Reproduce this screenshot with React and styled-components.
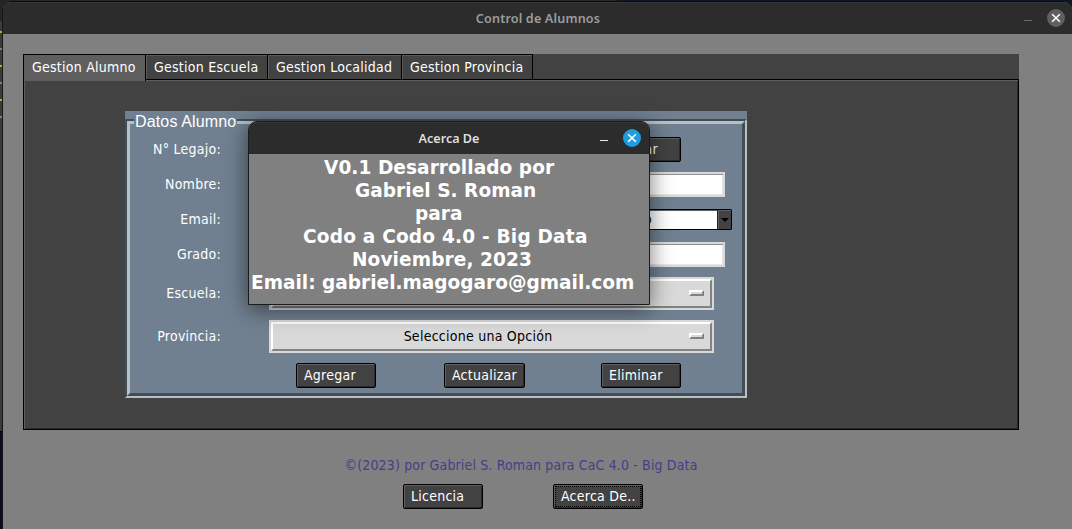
import React from "react";
import styled, { createGlobalStyle, css } from "styled-components";

const Global = createGlobalStyle`
  *, *::before, *::after { box-sizing: border-box; }
  html, body { margin: 0; padding: 0; background: #0b111b; overflow: hidden; }
  body {
    font-family: "DejaVu Sans Condensed", "DejaVu Sans", sans-serif;
    font-stretch: condensed;
    font-size: 14px;
    line-height: 16px;
    letter-spacing: 0.25px;
    color: #fff;
  }
`;

const Desktop = styled.div`
  width: 1072px;
  height: 529px;
  display: flex;
  padding-top: 1px;
  background: linear-gradient(90deg, #262626 617px, #0e1622 617px);
  overflow: hidden;
`;

const EditorEdge = styled.div`
  width: 2px;
  height: 528px;
  display: flex;
  flex-direction: column;
  gap: 15px;
  padding-top: 30px;
  background: linear-gradient(180deg, #262626 20px, #3b3b3b 20px, #3b3b3b 430px, #000 430px, #000 431px, #0a101b 431px);
`;

const CodeMark = styled.i`
  height: 2px;
  background: ${(p) => (p.$green ? "#86c232" : "#6088b0")};
`;

const Window = styled.main`
  width: 1070px;
  height: 528px;
  border-left: 1px solid #161616;
  border-top: 1px solid #0c0c0c;
  border-radius: 9px 9px 0 0;
  background: #808080;
  overflow: hidden;
`;

const TitleBar = styled.header`
  height: 32px;
  display: grid;
  grid-template-columns: 1fr auto 1fr;
  align-items: center;
  background: #2c2c2c;
  box-shadow: inset 0 1px #373737;
  font-family: "Noto Sans", sans-serif;
  font-stretch: normal;
  font-weight: 600;
  font-size: 12.6px;
  color: ${(p) => (p.$active ? "#dedede" : "#9d9d9d")};
  padding-right: ${(p) => (p.$active ? "8px" : "7px")};
  padding-left: 8px;
`;

const WindowTitle = styled.span`
  grid-column: 2;
  padding-top: 2px;
  letter-spacing: ${(p) => p.$spacing || "0"};
`;

const Controls = styled.div`
  display: flex;
  justify-content: flex-end;
  align-items: center;
  gap: 15px;
`;

const Minimize = styled.i`
  width: 8px;
  height: 1px;
  margin-top: 4px;
  background: ${(p) => (p.$active ? "#e8e8e8" : "#6c6c6c")};
`;

const CloseButton = styled.svg`
  width: 18px;
  height: 18px;
  display: block;
`;

function WindowControls({ active }) {
  return (
    <Controls>
      <Minimize $active={active} />
      <CloseButton viewBox="0 0 18 18">
        <circle cx="9" cy="9" r="9" fill={active ? "#1f9ede" : "#5f5f5f"} />
        <path d="M5.2 5.2 12.8 12.8M12.8 5.2 5.2 12.8" stroke="#fff" strokeWidth="1.6" />
      </CloseButton>
    </Controls>
  );
}

const Content = styled.div`
  padding: 20px 53px 0 20px;
`;

const TabStrip = styled.nav`
  display: flex;
  height: 25px;
  background: #424242;
`;

const Tab = styled.div`
  width: ${(p) => p.$width}px;
  height: ${(p) => (p.$selected ? 27 : 25)}px;
  padding: 4px 0 0 8px;
  border: solid #000;
  border-width: 1px 1px 0 ${(p) => (p.$selected ? 1 : 0)}px;
  background: ${(p) => (p.$selected ? "#5f5f5f" : "#424242")};
  box-shadow: ${(p) => (p.$selected ? "none" : "inset 1px 1px #5c5c5c")};
  position: relative;
  white-space: nowrap;
`;

const Pane = styled.section`
  height: 351px;
  padding: 31px 0 0 100px;
  border: 1px solid #000;
  background: #424242;
  box-shadow: inset 1px 1px #5f5f5f, inset -1px -1px #2a2a2a;
`;

const LabelFrame = styled.section`
  width: 622px;
  height: 287px;
  margin-left: 1px;
  padding-top: 8px;
  background: #708090;
`;

const Groove = styled.div`
  height: 279px;
  border: 2px solid;
  border-color: #434d56 #b7bfc7 #b7bfc7 #434d56;
`;

const GrooveInner = styled.div`
  height: 275px;
  border: 3px solid;
  border-color: #b7bfc7 #434d56 #434d56 #b7bfc7;
`;

const Legend = styled.h2`
  width: 103px;
  height: 18px;
  margin: -11px 0 1px 4px;
  padding-left: 1px;
  background: #708090;
  font: 400 16px/18px "Liberation Sans", sans-serif;
  letter-spacing: 0.15px;
  position: relative;
  white-space: nowrap;
`;

const Row = styled.div`
  height: ${(p) => (p.$tall ? 43 : 35)}px;
  display: grid;
  grid-template-columns: 91px 1fr;
  column-gap: 48px;
  align-items: center;
`;

const Label = styled.label`
  padding-bottom: 2px;
  text-align: right;
  white-space: nowrap;
`;

const Field = styled.div`
  display: flex;
  padding-left: ${(p) => p.$indent || 0}px;
`;

const Button = styled.button`
  width: ${(p) => p.$width || 80}px;
  height: 25px;
  padding: 0 0 1px 7px;
  border: 1px solid #000;
  border-radius: 2px;
  background: #424242;
  box-shadow: inset 1px 1px #606060, inset -1px -1px #2b2b2b;
  color: #fff;
  font: inherit;
  letter-spacing: inherit;
  text-align: left;
  white-space: nowrap;
  ${(p) =>
    p.$focused &&
    css`
      outline: 1px dotted #000;
      outline-offset: -3px;
    `}
`;

const Entry = styled.div`
  width: 170px;
  height: 25px;
  border: 2px solid #d9d9d9;
  background: #fff;
  box-shadow: inset 1px 1px #8f8f8f, inset -1px -1px #e8e8e8;
`;

const Combo = styled.div`
  width: 170px;
  height: 21px;
  display: flex;
  border: 1px solid #000;
  border-radius: 1px;
  background: #fff;
  box-shadow: inset 0 1px #606060;
  color: #111;
`;

const ComboValue = styled.span`
  flex: 1;
  padding: 1px 0 0 81px;
`;

const ComboArrow = styled.span`
  width: 14px;
  display: grid;
  place-items: center;
  border-left: 1px solid #222;
  background: #424242;
  box-shadow: inset 1px 1px #606060;
`;

const OptionMenu = styled.div`
  width: 445px;
  height: 33px;
  padding: 2px;
  background: #d9d9d9;
  color: #000;
`;

const OptionFace = styled.div`
  height: 29px;
  display: grid;
  grid-template-columns: 1fr 15px;
  align-items: center;
  padding: 0 6px 1px 4px;
  border: 2px solid;
  border-color: #fff #828282 #828282 #fff;
  text-align: center;
`;

const OptionText = styled.span`
  padding: 0 10px 1px 0;
`;

const Indicator = styled.i`
  height: 6px;
  border: 2px solid;
  border-color: #fff #828282 #828282 #fff;
`;

const Actions = styled.div`
  height: 35px;
  display: flex;
  align-items: center;
  padding-left: 166px;
`;

const Gap = styled.span`
  width: ${(p) => p.$size}px;
`;

const Footer = styled.footer`
  display: flex;
  flex-direction: column;
  align-items: center;
  padding-top: 27px;
  gap: 11px;
`;

const Copyright = styled.p`
  margin: 0;
  letter-spacing: 0.15px;
  color: #483d8b;
`;

const FooterButtons = styled.div`
  display: flex;
  gap: 70px;
  margin-left: 4px;
`;

const Dialog = styled.section`
  position: absolute;
  left: 248px;
  top: 121px;
  width: 402px;
  height: 184px;
  border: 1px solid #1b1b1b;
  border-radius: 9px 9px 0 0;
  background: #808080;
  box-shadow: 0 4px 22px rgba(0, 0, 0, 0.55);
  overflow: hidden;
`;

const DialogBody = styled.div`
  padding-top: 2px;
  font-family: "DejaVu Sans", sans-serif;
  font-stretch: normal;
  font-weight: 700;
  font-size: 18.55px;
  line-height: 23px;
  white-space: nowrap;
`;

const DialogLine = styled.div`
  padding-left: ${(p) => p.$indent}px;
  letter-spacing: ${(p) => p.$spacing}px;
`;

const tabs = [
  ["Gestion Alumno", 123],
  ["Gestion Escuela", 122],
  ["Gestion Localidad", 134],
  ["Gestion Provincia", 131],
];

const aboutLines = [
  ["V0.1 Desarrollado por", 75, 0.06],
  ["Gabriel S. Roman", 106, 0.04],
  ["para", 166, 0],
  ["Codo a Codo 4.0 - Big Data", 54, 0.2],
  ["Noviembre, 2023", 103, 0.1],
  ["Email: gabriel.magogaro@gmail.com", 2, 0],
];

function Select({ children }) {
  return (
    <OptionMenu>
      <OptionFace>
        <OptionText>{children}</OptionText>
        <Indicator />
      </OptionFace>
    </OptionMenu>
  );
}

export default function App() {
  return (
    <>
      <Global />
      <Desktop>
        <EditorEdge>
          {[1, 0, 1, 0, 1, 0].map((green, i) => (
            <CodeMark key={i} $green={green} />
          ))}
        </EditorEdge>
        <Window>
          <TitleBar>
            <WindowTitle $spacing="0.16px">Control de Alumnos</WindowTitle>
            <WindowControls />
          </TitleBar>
          <Content>
            <TabStrip>
              {tabs.map(([name, width], i) => (
                <Tab key={name} $width={width} $selected={i === 0}>
                  {name}
                </Tab>
              ))}
            </TabStrip>
            <Pane>
              <LabelFrame>
                <Groove>
                  <GrooveInner>
                    <Legend>Datos Alumno</Legend>
                    <Row>
                      <Label>N° Legajo:</Label>
                      <Field $indent={332}>
                        <Button>Limpiar</Button>
                      </Field>
                    </Row>
                    <Row>
                      <Label>Nombre:</Label>
                      <Field $indent={286}>
                        <Entry />
                      </Field>
                    </Row>
                    <Row>
                      <Label>Email:</Label>
                      <Field $indent={293}>
                        <Combo>
                          <ComboValue>o</ComboValue>
                          <ComboArrow>
                            <svg width="8" height="4" viewBox="0 0 8 4">
                              <path d="M0 0H8L4 4Z" fill="#000" />
                            </svg>
                          </ComboArrow>
                        </Combo>
                      </Field>
                    </Row>
                    <Row>
                      <Label>Grado:</Label>
                      <Field $indent={286}>
                        <Entry />
                      </Field>
                    </Row>
                    <Row $tall>
                      <Label>Escuela:</Label>
                      <Field>
                        <Select />
                      </Field>
                    </Row>
                    <Row $tall>
                      <Label>Provincia:</Label>
                      <Field>
                        <Select>Seleccione una Opción</Select>
                      </Field>
                    </Row>
                    <Actions>
                      <Button>Agregar</Button>
                      <Gap $size={68} />
                      <Button $width={81}>Actualizar</Button>
                      <Gap $size={76} />
                      <Button>Eliminar</Button>
                    </Actions>
                  </GrooveInner>
                </Groove>
              </LabelFrame>
            </Pane>
            <Footer>
              <Copyright>©(2023) por Gabriel S. Roman para CaC 4.0 - Big Data</Copyright>
              <FooterButtons>
                <Button>Licencia</Button>
                <Button $width={90} $focused>
                  Acerca De..
                </Button>
              </FooterButtons>
            </Footer>
          </Content>
        </Window>
      </Desktop>
      <Dialog>
        <TitleBar $active>
          <WindowTitle>Acerca De</WindowTitle>
          <WindowControls active />
        </TitleBar>
        <DialogBody>
          {aboutLines.map(([text, indent, spacing]) => (
            <DialogLine key={text} $indent={indent} $spacing={spacing}>
              {text}
            </DialogLine>
          ))}
        </DialogBody>
      </Dialog>
    </>
  );
}
